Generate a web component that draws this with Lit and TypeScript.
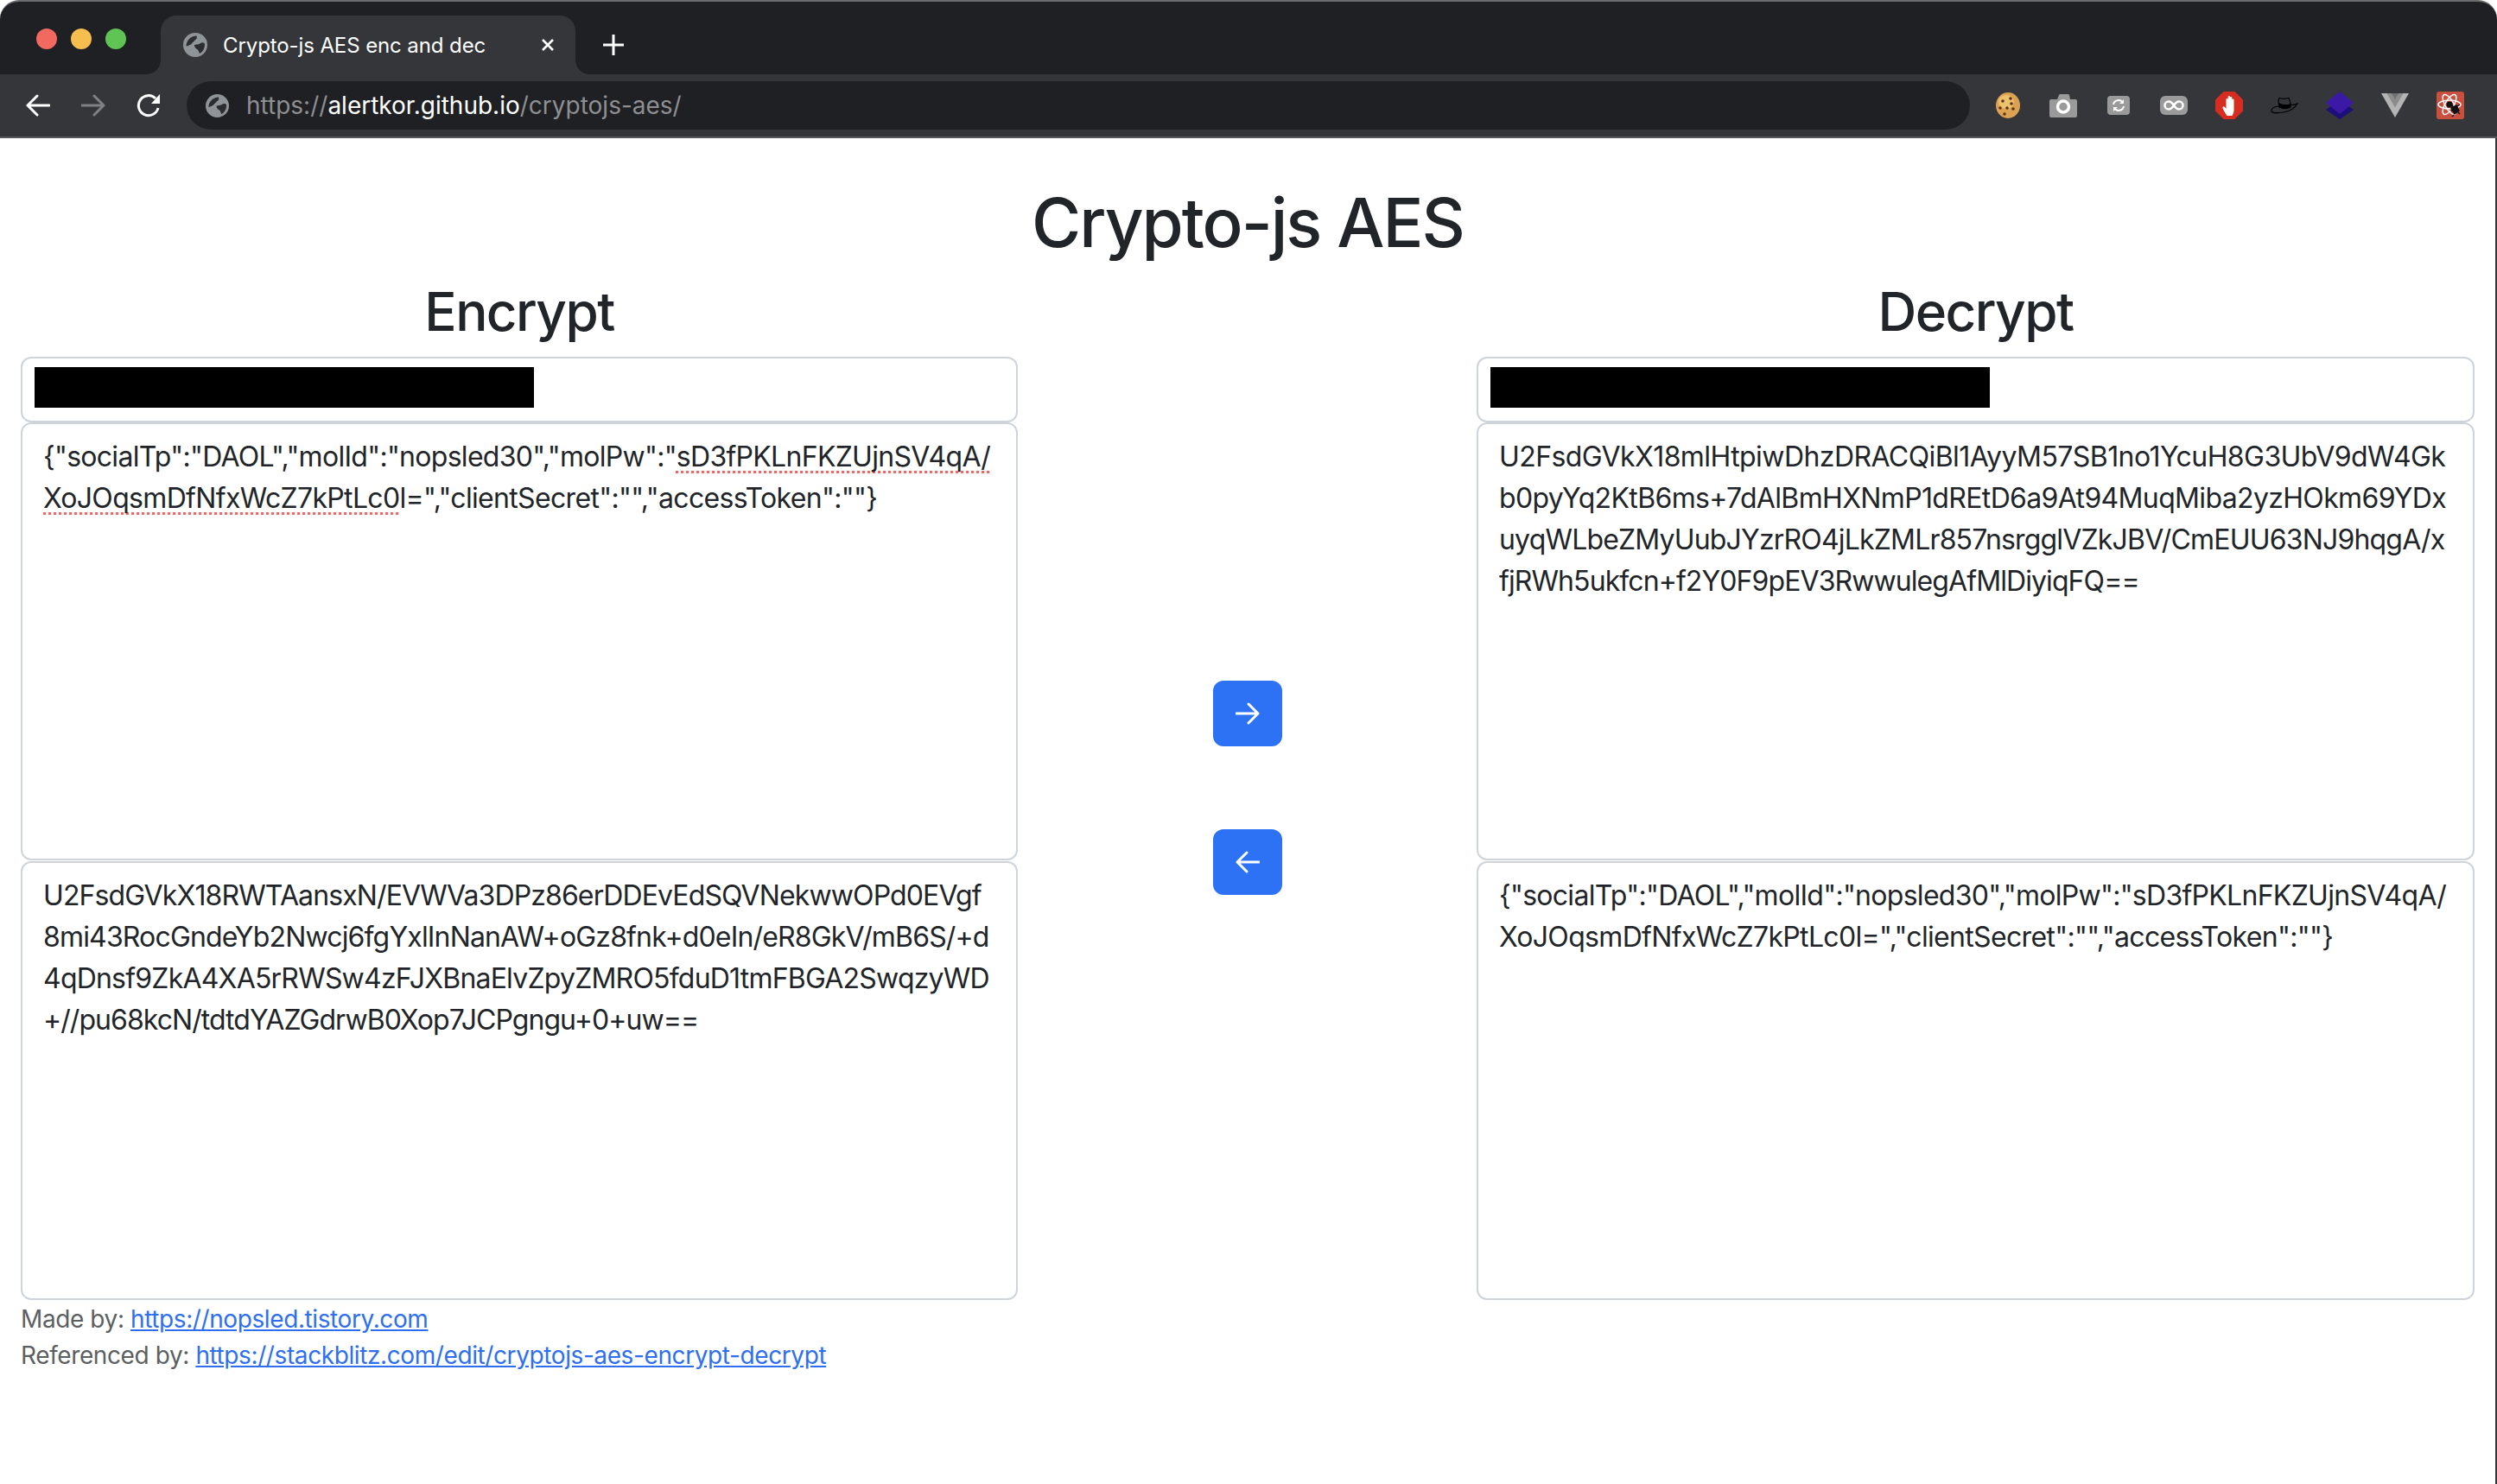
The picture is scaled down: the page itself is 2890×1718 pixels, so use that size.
import { LitElement, html, css, svg } from "lit";
import { customElement } from "lit/decorators.js";

const globe = (size: number) => html`<svg class="globe" width=${size} height=${size} viewBox="0 0 28 28">
  <circle cx="14" cy="14" r="14" fill="#8f9499" />
  <path d="M3.500 15.500C3.500 9 9 3.500 15.500 3.500c1 2 0 4-2 5-1 2-3 2.500-4 4.500-2 1-3.500 2-6 2.500z" fill="#2c2d31" />
  <path d="M13 14c3-1 5 0 7-2 2-1 4-1 5 1 0 6-3 9.500-6 11-1-2-1-4-3-5-2-1-3-3-3-5z" fill="#2c2d31" />
</svg>`;

// line content plus a small tracking tweak so each line ends where the reference does
type Line = { t: unknown; ls: number };

const ENC_IN: Line[] = [
  { t: html`{"socialTp":"DAOL","molId":"nopsled30","molPw":"<span class="typo">sD3fPKLnFKZUjnSV4qA/</span>`, ls: -0.11 },
  { t: html`<span class="typo">XoJOqsmDfNfxWcZ7kPtLc0</span>l=","clientSecret":"","accessToken":""}`, ls: -0.07 },
];
const ENC_OUT: Line[] = [
  { t: "U2FsdGVkX18RWTAansxN/EVWVa3DPz86erDDEvEdSQVNekwwOPd0EVgf", ls: -0.28 },
  { t: "8mi43RocGndeYb2Nwcj6fgYxlInNanAW+oGz8fnk+d0eIn/eR8GkV/mB6S/+d", ls: -0.24 },
  { t: "4qDnsf9ZkA4XA5rRWSw4zFJXBnaElvZpyZMRO5fduD1tmFBGA2SwqzyWD", ls: -0.19 },
  { t: "+//pu68kcN/tdtdYAZGdrwB0Xop7JCPgngu+0+uw==", ls: -0.35 },
];
const DEC_IN: Line[] = [
  { t: "U2FsdGVkX18mlHtpiwDhzDRACQiBl1AyyM57SB1no1YcuH8G3UbV9dW4Gk", ls: 0.03 },
  { t: "b0pyYq2KtB6ms+7dAlBmHXNmP1dREtD6a9At94MuqMiba2yzHOkm69YDx", ls: -0.05 },
  { t: "uyqWLbeZMyUubJYzrRO4jLkZMLr857nsrgglVZkJBV/CmEUU63NJ9hqgA/x", ls: -0.22 },
  { t: "fjRWh5ukfcn+f2Y0F9pEV3RwwulegAfMlDiyiqFQ==", ls: -0.31 },
];
const DEC_OUT: Line[] = [
  { t: `{"socialTp":"DAOL","molId":"nopsled30","molPw":"sD3fPKLnFKZUjnSV4qA/`, ls: -0.11 },
  { t: `XoJOqsmDfNfxWcZ7kPtLc0l=","clientSecret":"","accessToken":""}`, ls: -0.07 },
];

const lines = (rows: Line[]) =>
  rows.map((l) => html`<div style="letter-spacing:${(-0.6 + l.ls).toFixed(2)}px">${l.t}</div>`);

@customElement("app-root")
export class AppRoot extends LitElement {
  static styles = css`
    :host {
      display: block;
      width: 2890px;
      height: 1718px;
      overflow: hidden;
      background: #fff;
      font-family: Inter, "Liberation Sans", sans-serif;
      color: #212529;
    }
    .titlebar {
      height: 84px;
      border-top: 2px solid #6a6b6d;
      border-radius: 22px 22px 0 0;
      background: #1f2024;
      display: flex;
      align-items: flex-end;
      box-sizing: content-box;
    }
    .lights {
      display: flex;
      gap: 16px;
      width: 186px;
      box-sizing: border-box;
      padding: 0 0 29px 42px;
    }
    .lights i {
      width: 24px;
      height: 24px;
      border-radius: 50%;
    }
    .red {
      background: #f1695f;
    }
    .yellow {
      background: #f6bd4f;
    }
    .green {
      background: #5fc454;
    }
    .tab {
      position: relative;
      width: 480px;
      height: 68px;
      box-sizing: border-box;
      padding: 0 24px 0 26px;
      background: #35363a;
      border-radius: 18px 18px 0 0;
      display: flex;
      align-items: center;
      gap: 18px;
      color: #fff;
      font-size: 24px;
      letter-spacing: -0.1px;
    }
    .tab::before,
    .tab::after {
      content: "";
      position: absolute;
      bottom: 0;
      width: 16px;
      height: 16px;
      background: radial-gradient(circle at 0 0, transparent 15.5px, #35363a 16px);
    }
    .tab::before {
      left: -16px;
    }
    .tab::after {
      right: -16px;
      transform: scaleX(-1);
    }
    .tab .name {
      flex: 1;
      white-space: nowrap;
    }
    .plus {
      margin: 0 0 22px 32px;
    }
    .toolbar {
      height: 72px;
      border-bottom: 2px solid #56575a;
      background: #35363a;
      display: flex;
      align-items: center;
    }
    .nav {
      display: flex;
      align-items: center;
      width: 216px;
      box-sizing: border-box;
      padding-left: 30px;
      gap: 36px;
    }
    .address {
      width: 2064px;
      height: 56px;
      box-sizing: border-box;
      padding-left: 22px;
      border-radius: 28px;
      background: #1f2024;
      display: flex;
      align-items: center;
      gap: 20px;
      font-size: 28px;
      color: #8e8f91;
      white-space: nowrap;
    }
    .address b {
      font-weight: 400;
      color: #fff;
    }
    .exts {
      display: grid;
      grid-auto-flow: column;
      grid-auto-columns: 64px;
      justify-items: center;
      align-items: center;
      padding-left: 12px;
    }
    .page {
      height: 1558px;
      box-sizing: border-box;
      border-right: 2px solid #35363a;
      padding: 50px 24px 0;
    }
    h1 {
      margin: 0 0 16px;
      font-size: 78px;
      line-height: 96px;
      font-weight: 550;
      text-align: center;
      letter-spacing: -2px;
    }
    .columns {
      display: grid;
      grid-template-columns: 1154px 1fr 1155px;
    }
    h2 {
      margin: 0 0 14px;
      font-size: 62px;
      line-height: 77px;
      font-weight: 550;
      text-align: center;
      letter-spacing: -1.6px;
    }
    .input,
    .area {
      border: 2px solid #ced4da;
      border-radius: 12px;
      background: #fff;
      box-sizing: border-box;
    }
    .input {
      height: 76px;
      padding: 10px 14px;
    }
    .redact {
      width: 578px;
      height: 47px;
      background: #000;
    }
    .area {
      height: 507px;
      padding: 14px 24px;
      font-size: 32px;
      line-height: 48px;
      white-space: nowrap;
    }
    .area + .area {
      margin-top: 1px;
      height: 508px;
    }
    .typo {
      text-decoration: underline dotted #f2675f 3px;
      text-decoration-skip-ink: none;
      text-underline-offset: 5px;
    }
    .mid {
      display: flex;
      flex-direction: column;
      align-items: center;
      justify-content: center;
      gap: 96px;
      padding-bottom: 3px;
    }
    .btn {
      width: 80px;
      height: 76px;
      border-radius: 12px;
      background: #2d72f5;
      display: flex;
      align-items: center;
      justify-content: center;
    }
    .foot {
      margin-top: 1px;
      font-size: 28px;
      line-height: 42px;
      color: #5c5f62;
      letter-spacing: -0.4px;
    }
    a {
      color: #2d6ff0;
      text-decoration: underline;
    }
  `;

  private arrow(dir: "left" | "right", stroke: string, w = 3) {
    const d = dir === "left" ? "M27 13H2M13 2 2 13l11 11" : "M1 13h25M15 2l11 11-11 11";
    return html`<svg width="28" height="26" viewBox="0 0 28 26" fill="none" stroke=${stroke} stroke-width=${w} stroke-linecap="round" stroke-linejoin="round"><path d=${d} /></svg>`;
  }

  private extensions() {
    return [
      // cookie
      html`<svg width="30" height="32" viewBox="0 0 30 32">
        <ellipse cx="15" cy="16" rx="14" ry="15" fill="#dca254" />
        <ellipse cx="13" cy="12" rx="9" ry="8" fill="#edc06e" />
        ${[[9, 11], [18, 8], [14, 19], [21, 20], [6, 19], [19, 14], [11, 26]].map(([x, y]) => svg`<circle cx=${x} cy=${y} r="1.8" fill="#5b3417" />`)}
      </svg>`,
      // camera
      html`<svg width="32" height="30" viewBox="0 0 32 30">
        <path d="M2 8h7l2-5q.5-1 2-1h8q1.500 0 2 1l1 5h6q2 0 2 2v17q0 2-2 2H2q-2 0-2-2V10q0-2 2-2z" fill="#9a9a9a" />
        <circle cx="16" cy="16.500" r="6.500" fill="none" stroke="#fff" stroke-width="3.500" />
      </svg>`,
      // sync
      html`<svg width="26" height="22" viewBox="0 0 26 22">
        <rect width="26" height="22" rx="4" fill="#9a9a9a" />
        <path d="M7 10a6 6 0 0 1 11-2M19 12a6 6 0 0 1-11 2" fill="none" stroke="#fff" stroke-width="2" />
        <path d="m19 4v5h-5zM7 18v-5h5z" fill="#fff" />
      </svg>`,
      // infinity
      html`<svg width="32" height="22" viewBox="0 0 32 22">
        <rect width="32" height="22" rx="6" fill="#9a9a9a" />
        <path d="M16 11c-2-3-4-4.500-6-4.500a4.500 4.500 0 0 0 0 9c2 0 4-1.500 6-4.500s4-4.500 6-4.500a4.500 4.500 0 0 1 0 9c-2 0-4-1.500-6-4.500z" fill="none" stroke="#fff" stroke-width="2.500" />
      </svg>`,
      // adblock
      html`<svg width="32" height="32" viewBox="0 0 32 32">
        <path d="M9.500 0h13L32 9.500v13L22.500 32h-13L0 22.500v-13z" fill="#d62d20" />
        <path transform="translate(2.500 0)" d="M11 28c-2-3-4-6-5-9-.5-1.500 1.500-2.500 2.500-1l1.500 2V9c0-1.500 2.200-1.500 2.200 0v6-9c0-1.500 2.300-1.500 2.300 0v9V7c0-1.500 2.300-1.500 2.300 0v8V9.500c0-1.500 2.200-1.500 2.200 0V21c0 3-1 5-2 7h-6z" fill="#fff" />
      </svg>`,
      // hat
      html`<svg width="32" height="20" viewBox="0 0 32 20" fill="none" stroke="#000" stroke-width="1.200">
        <path d="M10 11C9 7 9 3 10 1.500c3 1 7 1 11 0 1 2 2 5 2 8 3 0 6-.5 8-1.500-3 5-9 9-16 10-6 1-13 1-14-1-1-3 3-6 9-6z" />
        <path d="M10 8c4 2 9 2 13 1l0 3c-4 2-9 2-13 0z" fill="#000" />
      </svg>`,
      // stacked diamonds
      html`<svg width="32" height="32" viewBox="0 0 32 32">
        <path d="M0 21 16 10l16 11-16 11z" fill="#1c0f7c" />
        <path d="M0 13 16 0l16 13-16 13z" fill="#3c18a6" />
      </svg>`,
      // vue
      html`<svg width="32" height="28" viewBox="0 0 32 28">
        <path d="M0 0h32L16 28z" fill="#b4b4b4" />
        <path d="M6.500 0h19L16 16.500z" fill="#8c8c8c" />
        <path d="M12 0h8l-4 7z" fill="#6f7072" />
      </svg>`,
      // react debug
      html`<svg width="32" height="32" viewBox="0 0 32 32">
        <rect width="32" height="32" rx="3" fill="#c9503f" />
        <g fill="none" stroke="#fff" stroke-width="1.500">
          <ellipse cx="15" cy="15" rx="13" ry="5" />
          <ellipse cx="15" cy="15" rx="13" ry="5" transform="rotate(60 15 15)" />
          <ellipse cx="15" cy="15" rx="13" ry="5" transform="rotate(-60 15 15)" />
        </g>
        <circle cx="15" cy="15" r="3.500" fill="#111" />
        <path d="M17 19l6-3 3 6-5 4zM16 21l3 2M24 17l3-2M19 17l-2-3M25 24l2 2M20 27l-2 2" fill="#111" stroke="#111" stroke-width="1.400" />
      </svg>`,
    ];
  }

  render() {
    return html`
      <div class="titlebar">
        <div class="lights"><i class="red"></i><i class="yellow"></i><i class="green"></i></div>
        <div class="tab">
          ${globe(28)}
          <span class="name">Crypto-js AES enc and dec</span>
          <svg width="16" height="16" viewBox="0 0 16 16" fill="none" stroke="#fff" stroke-width="2.600"><path d="M2 2l12 12M14 2 2 14" /></svg>
        </div>
        <svg class="plus" width="24" height="24" viewBox="0 0 24 24" fill="none" stroke="#fff" stroke-width="3"><path d="M12 0v24M0 12h24" /></svg>
      </div>
      <div class="toolbar">
        <div class="nav">
          ${this.arrow("left", "#fff")} ${this.arrow("right", "#7f8083")}
          <svg width="28" height="28" viewBox="0 0 28 28">
            <path d="M25 17a11.500 11.500 0 1 1-3-11" fill="none" stroke="#fff" stroke-width="3" />
            <path d="M27 1v11H17z" fill="#fff" />
          </svg>
        </div>
        <div class="address">
          ${globe(27)}
          <span>https://<b>alertkor.github.io</b>/cryptojs-aes/</span>
        </div>
        <div class="exts">${this.extensions()}</div>
      </div>
      <div class="page">
        <h1>Crypto-js AES</h1>
        <div class="columns">
          <div>
            <h2>Encrypt</h2>
            <div class="input"><div class="redact"></div></div>
            <div class="area">${lines(ENC_IN)}</div>
            <div class="area">${lines(ENC_OUT)}</div>
          </div>
          <div class="mid">
            <div class="btn">${this.arrow("right", "#fff", 3)}</div>
            <div class="btn">${this.arrow("left", "#fff", 3)}</div>
          </div>
          <div>
            <h2>Decrypt</h2>
            <div class="input"><div class="redact"></div></div>
            <div class="area">${lines(DEC_IN)}</div>
            <div class="area">${lines(DEC_OUT)}</div>
          </div>
        </div>
        <div class="foot">
          <div>Made by: <a href="#">https://nopsled.tistory.com</a></div>
          <div>Referenced by: <a href="#">https://stackblitz.com/edit/cryptojs-aes-encrypt-decrypt</a></div>
        </div>
      </div>
    `;
  }
}
